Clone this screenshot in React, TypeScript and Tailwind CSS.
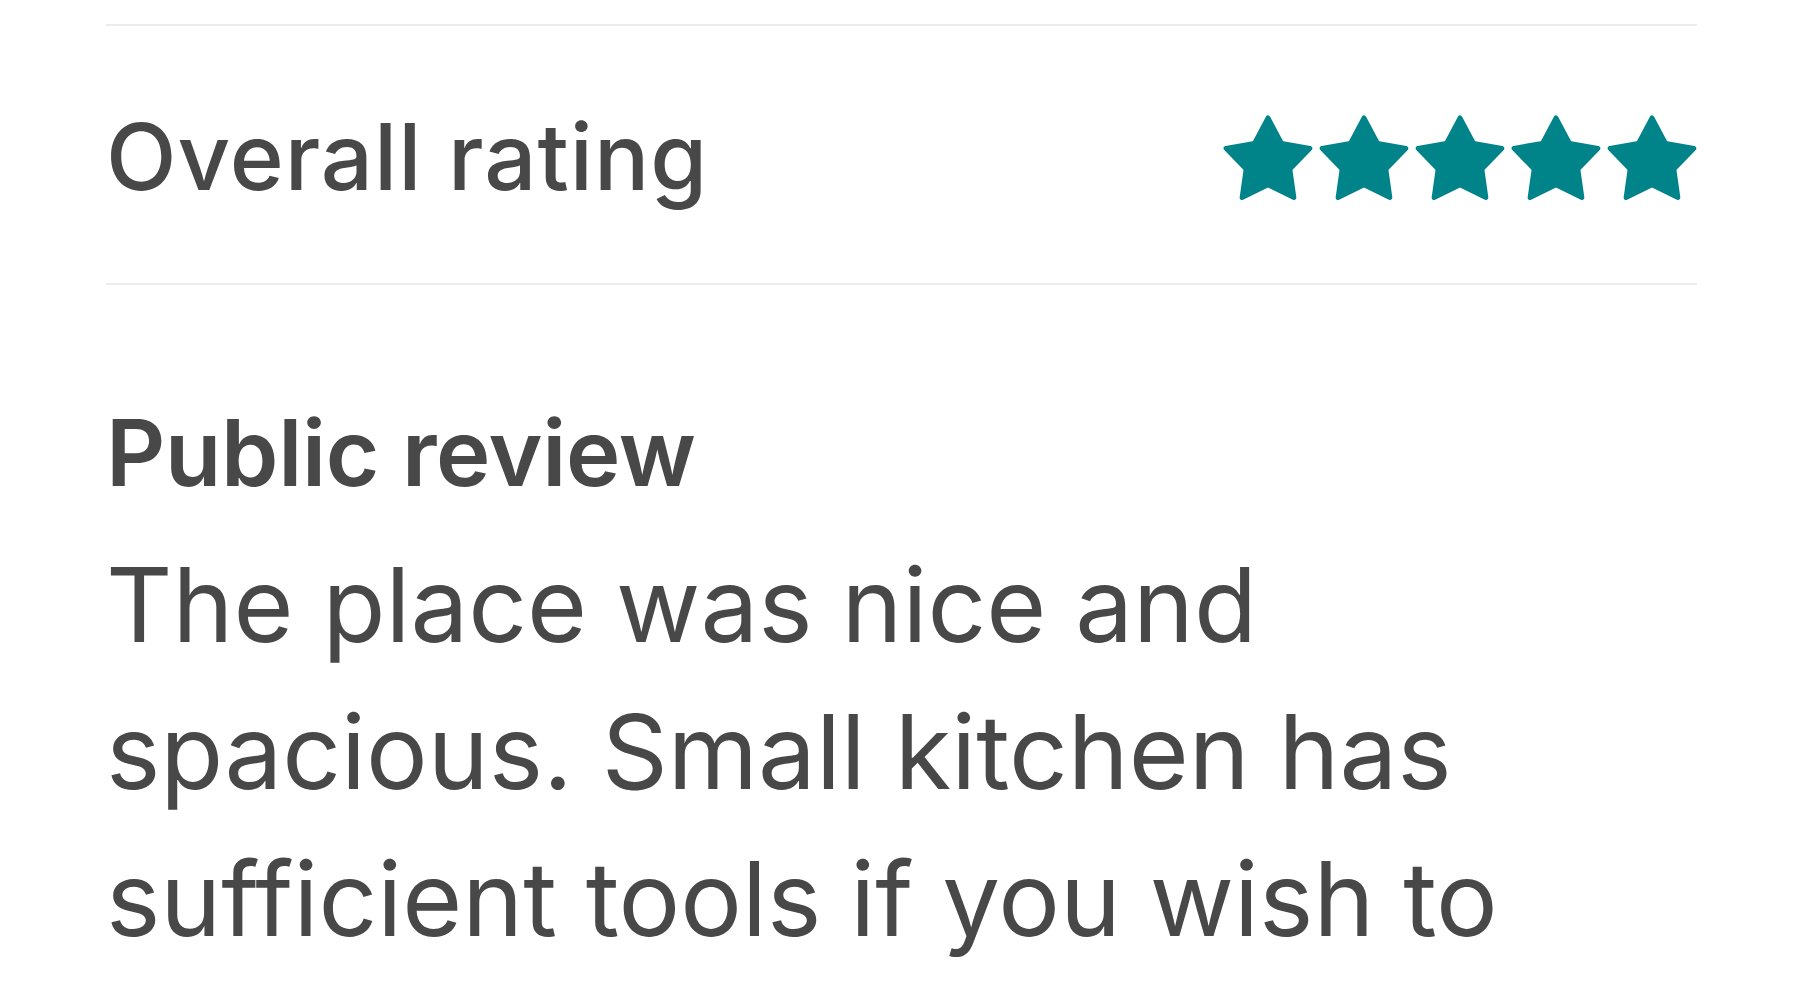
import React from "react";

const STAR_POINTS =
  "50,6 64.11,32.58 93.75,37.79 72.83,59.42 77.04,89.21 50,76 22.96,89.21 27.17,59.42 6.25,37.79 35.89,32.58";

function Star() {
  return (
    <svg viewBox="0 0 100 100" className="w-[96px] h-[96px]">
      <polygon
        points={STAR_POINTS}
        fill="#008489"
        stroke="#008489"
        strokeWidth={5}
        strokeLinejoin="round"
      />
    </svg>
  );
}

export default function App() {
  return (
    <div
      className="w-[1800px] h-[1000px] overflow-hidden bg-white text-[#484848]"
      style={{ fontFamily: "Inter, 'Noto Sans', sans-serif" }}
    >
      <div className="pl-[106px] pr-[103px] pt-[24px]">
        <div className="h-[2px] bg-[#ebebeb]" />
        <div className="flex items-center justify-between h-[257px]">
          <div className="text-[92px] font-medium leading-none tracking-[1px] pt-[4px]">Overall rating</div>
          <div className="flex pt-[10px] -mr-[3px]">
            <Star />
            <Star />
            <Star />
            <Star />
            <Star />
          </div>
        </div>
        <div className="h-[2px] bg-[#ebebeb]" />
        <div className="pt-[122px]">
          <div className="text-[92px] font-semibold leading-none tracking-[-0.3px]">Public review</div>
          <div className="mt-[32px] text-[103px] font-normal leading-[147px]">
            <div>The place was nice and</div>
            <div>spacious. Small kitchen has</div>
            <div>sufficient tools if you wish to</div>
          </div>
        </div>
      </div>
    </div>
  );
}
